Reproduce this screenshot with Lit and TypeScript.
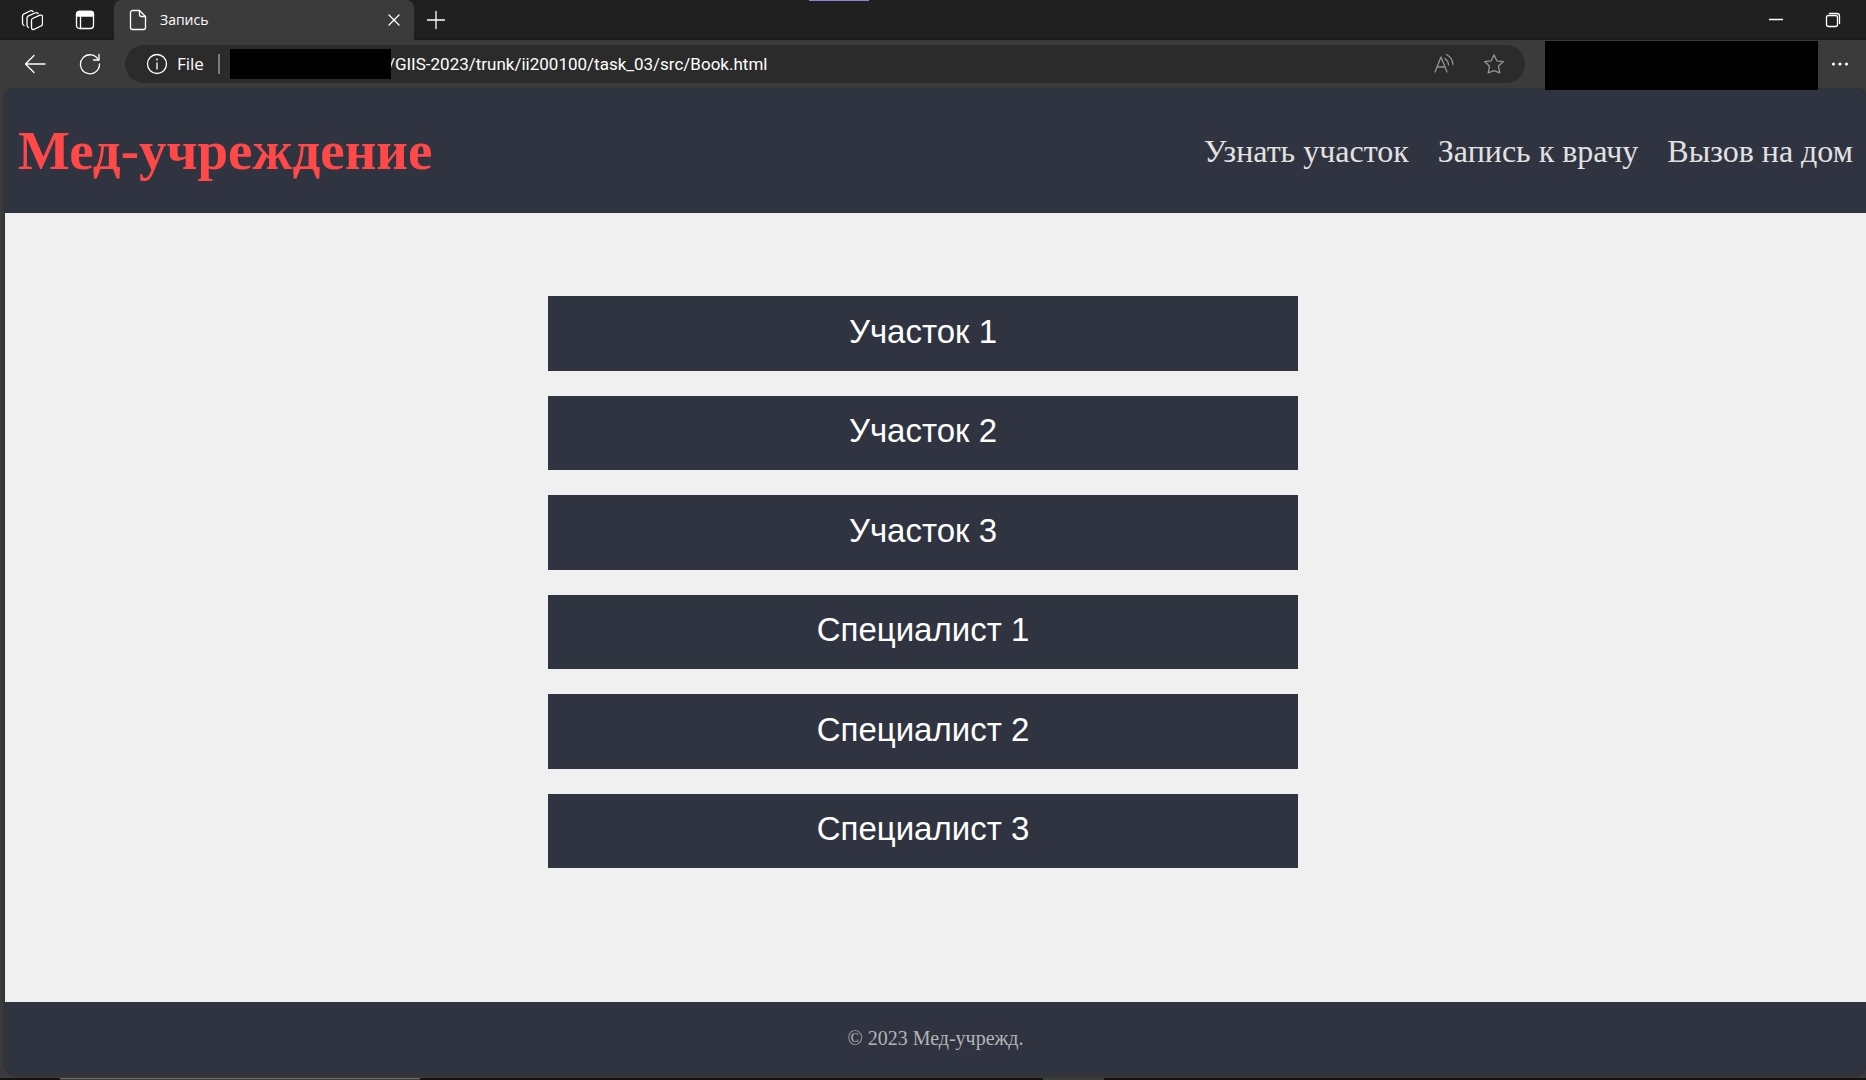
import { LitElement, html, css, svg } from "lit";
import { customElement } from "lit/decorators.js";

const icons = {
  workspaces: svg`<path d="M11.500 9.500 19 6.200 Q21.500 5.500 21.500 8 V14.500 Q21.500 16.300 20 17 L13.500 20.200 Q10.500 21.300 10.500 18.500 V11.500 Q10.500 10 11.500 9.500Z"/>
    <path d="M7.500 18.500 Q6 18 6 16 V9 Q6 7.500 7.500 6.800 L14 4 Q16 3.200 17 4.500"/>
    <path d="M3 16.500 Q1.500 16 1.500 14 V7 Q1.500 5.500 3 4.800 L9 2 Q11 1.200 12 2.500"/>`,
  tabs: svg`<rect x="2.500" y="2.500" width="17" height="17" rx="3"/><path d="M2.500 7V5a2.500 2.500 0 0 1 2.500-2.500h12A2.500 2.500 0 0 1 19.500 5v2z" fill="currentColor"/><path d="M6.500 7v12.500"/>`,
  file: svg`<path d="M5.500 1.500h7l6 6v11a2 2 0 0 1-2 2h-11a2 2 0 0 1-2-2v-15a2 2 0 0 1 2-2z"/><path d="M12.500 1.500v4a2 2 0 0 0 2 2h4"/>`,
  close: svg`<path d="M6 6l10 10M16 6 6 16"/>`,
  plus: svg`<path d="M11 2.500v17M2.500 11h17"/>`,
  minimise: svg`<path d="M4.500 10.500h13"/>`,
  restore: svg`<rect x="4.500" y="6.500" width="11" height="11" rx="2"/><path d="M7.500 4.500h7.500a2.500 2.500 0 0 1 2.500 2.500v7.500"/>`,
  back: svg`<path d="M21 11H2M10 2.500 1.500 11l8.500 8.500"/>`,
  reload: svg`<path d="M19.500 7A9.500 9.500 0 1 0 20.500 11"/><path d="M20 1.500V7h-5.500"/>`,
  info: svg`<circle cx="11" cy="11" r="9.500"/><path d="M11 10v6M11 6v1"/>`,
  read: svg`<path d="M2 19 8 4l6 15M4 14h8M12 5.500a9 9 0 0 1 3.500 6.500M13.500 1.500a12 12 0 0 1 6.500 10"/>`,
  star: svg`<path d="M11 1.800l2.800 6 6.600.8-4.900 4.500 1.300 6.800L11 17.600l-5.800 2.300 1.300-6.800-4.900-4.500 6.600-.8z"/>`,
  more: svg`<g fill="currentColor" stroke="none"><circle cx="4.500" cy="11" r="1.600"/><circle cx="11" cy="11" r="1.600"/><circle cx="17.500" cy="11" r="1.600"/></g>`,
};

const icon = (name: keyof typeof icons) =>
  html`<svg class="icon" viewBox="0 0 22 22" aria-hidden="true">${icons[name]}</svg>`;

@customElement("browser-chrome")
export class BrowserChrome extends LitElement {
  static styles = css`
    :host {
      display: block;
      position: relative;
      background: #3b3b3b;
      color: #fff;
      font-family: "Open Sans", "Noto Sans", sans-serif;
    }
    * { box-sizing: border-box; }
    button {
      display: flex;
      padding: 0;
      border: 0;
      background: none;
      color: inherit;
    }
    .icon {
      display: block;
      flex: none;
      width: 22px;
      height: 22px;
      fill: none;
      stroke: currentColor;
      stroke-width: 1.3;
      stroke-linecap: round;
      stroke-linejoin: round;
    }
    .strip {
      display: flex;
      height: 40px;
      background: #202020;
      box-shadow: inset 0 -2px 2px -1px #181818;
    }
    .lead {
      display: flex;
      align-items: center;
      gap: 31px;
      width: 114px;
      padding-left: 21px;
    }
    .tab {
      display: flex;
      align-items: center;
      width: 300px;
      padding: 0 9px 0 13px;
      border-radius: 8px 8px 0 0;
      background: #3b3b3b;
    }
    .title {
      flex: 1;
      padding: 0 0 1px 11px;
      font-size: 14px;
      line-height: 20px;
    }
    .new { padding-left: 11px; align-items: center; }
    .window {
      display: flex;
      align-items: center;
      gap: 35px;
      margin-left: auto;
      padding-right: 22px;
    }
    .accent {
      position: absolute;
      top: 0;
      left: 809px;
      width: 60px;
      height: 1px;
      background: #8b86d8;
    }
    .bar {
      display: flex;
      align-items: center;
      height: 48px;
      padding: 0 15px 0 24px;
    }
    .nav { display: flex; gap: 33px; width: 101px; }
    .address {
      display: flex;
      flex: 1;
      align-items: center;
      height: 38px;
      padding: 0 20px 0 21px;
      border-radius: 19px;
      background: #2b2b2b;
      font-size: 17px;
      line-height: 24px;
    }
    .scheme { padding: 0 14px 0 9px; }
    .divider { width: 2px; height: 20px; background: #7c7c7c; }
    .mask { z-index: 1; width: 161px; height: 30px; margin-left: 10px; background: #000; }
    .url {
      flex: 1;
      min-width: 0;
      height: 24px;
      margin-left: -3px;
      padding: 0;
      border: 0;
      outline: 0;
      background: none;
      color: inherit;
      font: inherit;
      font-family: Roboto, sans-serif;
    }
    .actions { display: flex; gap: 28px; color: #949494; }
    .extensions {
      position: absolute;
      z-index: 1;
      top: 41px;
      right: 48px;
      width: 273px;
      height: 49px;
      background: #000;
    }
    .more { margin-left: 304px; }
  `;

  render() {
    return html`
      <div class="strip">
        <div class="lead">
          <button aria-label="Workspaces">${icon("workspaces")}</button>
          <button aria-label="Tab actions">${icon("tabs")}</button>
        </div>
        <div class="tab">
          ${icon("file")}
          <span class="title">Запись</span>
          <button aria-label="Close tab">${icon("close")}</button>
        </div>
        <button class="new" aria-label="New tab">${icon("plus")}</button>
        <div class="window">
          <button aria-label="Minimise">${icon("minimise")}</button>
          <button aria-label="Restore">${icon("restore")}</button>
        </div>
      </div>
      <div class="accent"></div>
      <div class="bar">
        <div class="nav">
          <button aria-label="Back">${icon("back")}</button>
          <button aria-label="Refresh">${icon("reload")}</button>
        </div>
        <div class="address">
          ${icon("info")}
          <span class="scheme">File</span>
          <span class="divider"></span>
          <span class="mask"></span>
          <input class="url" aria-label="Address"
            .value=${"/GIIS-2023/trunk/ii200100/task_03/src/Book.html"} />
          <div class="actions">
            <button aria-label="Read aloud">${icon("read")}</button>
            <button aria-label="Favourite">${icon("star")}</button>
          </div>
        </div>
        <button class="more" aria-label="More">${icon("more")}</button>
      </div>
      <div class="extensions"></div>
    `;
  }
}

@customElement("clinic-page")
export class ClinicPage extends LitElement {
  static styles = css`
    :host {
      display: flex;
      flex-direction: column;
      overflow: hidden;
      border-radius: 10px;
      background: #303440;
      box-shadow: 0 0 3px #222;
      font-family: "Liberation Serif", serif;
    }
    * { box-sizing: border-box; }
    a { color: inherit; text-decoration: none; }
    .head {
      display: flex;
      align-items: center;
      justify-content: space-between;
      height: 125px;
      padding: 0 13px;
    }
    .brand { margin: 0; color: #ff4848; font-size: 55px; line-height: 62px; }
    .links {
      display: flex;
      gap: 29px;
      color: #e2e2e2;
      font-size: 32px;
      line-height: 38px;
    }
    .main {
      display: flex;
      flex: 1;
      justify-content: center;
      padding: 83px 25px 134px 0;
      background: #f0f0f0;
    }
    .choices {
      display: grid;
      grid-auto-rows: 1fr;
      gap: 25px;
      width: 750px;
    }
    .choice {
      padding: 0 0 3px;
      border: 0;
      background: #303440;
      color: #fff;
      font-family: "Liberation Sans", sans-serif;
      font-size: 33px;
      line-height: 38px;
    }
    .foot {
      padding: 25px 0;
      color: #b4b4b4;
      font-size: 20px;
      line-height: 23px;
      text-align: center;
    }
  `;

  private choices = [
    "Участок 1", "Участок 2", "Участок 3",
    "Специалист 1", "Специалист 2", "Специалист 3",
  ];

  render() {
    return html`
      <header class="head">
        <h1 class="brand">Мед-учреждение</h1>
        <nav class="links">
          <a href="#area">Узнать участок</a>
          <a href="#book">Запись к врачу</a>
          <a href="#home">Вызов на дом</a>
        </nav>
      </header>
      <main class="main">
        <div class="choices">
          ${this.choices.map((label) => html`<button class="choice">${label}</button>`)}
        </div>
      </main>
      <footer class="foot">© 2023 Мед-учрежд.</footer>
    `;
  }
}

@customElement("app-root")
export class AppRoot extends LitElement {
  static styles = css`
    :host {
      display: flex;
      flex-direction: column;
      min-height: 100vh;
      background: #3b3b3b;
    }
    .page { flex: 1; margin: 0 0 3px 5px; }
    .desktop { display: flex; height: 2px; background: #161214; }
    .taskbar { width: 360px; margin-left: 60px; border-top: 1px solid #6a6a6a; background: #3b3b3b; }
    .item { width: 61px; margin-left: 623px; background: #3b3b3b; }
  `;

  render() {
    return html`
      <browser-chrome></browser-chrome>
      <clinic-page class="page"></clinic-page>
      <div class="desktop"><div class="taskbar"></div><div class="item"></div></div>
    `;
  }
}
